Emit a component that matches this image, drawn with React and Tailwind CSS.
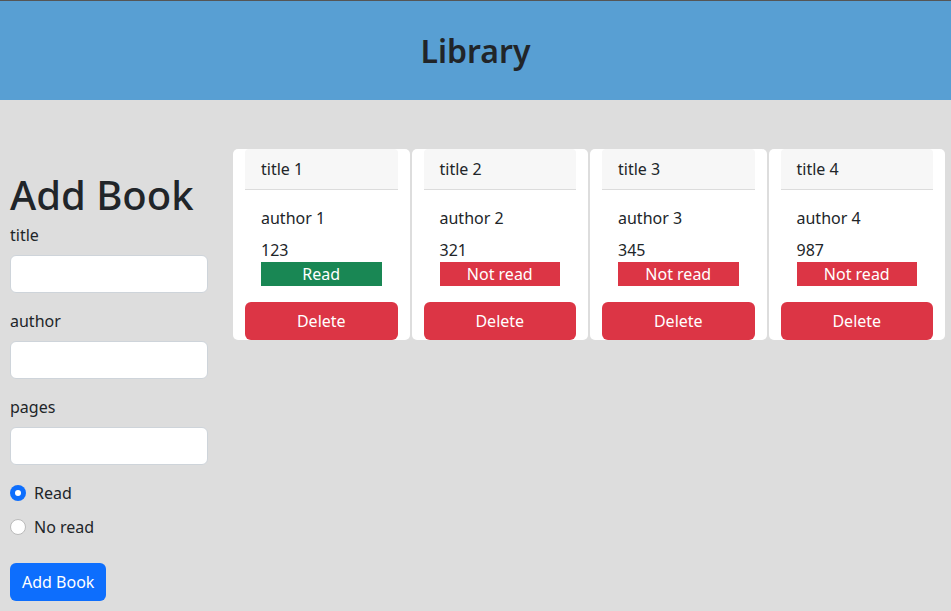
import { useState } from 'react';

const books = [
  { id: 1, title: 'title 1', author: 'author 1', pages: 123, read: true },
  { id: 2, title: 'title 2', author: 'author 2', pages: 321, read: false },
  { id: 3, title: 'title 3', author: 'author 3', pages: 345, read: false },
  { id: 4, title: 'title 4', author: 'author 4', pages: 987, read: false },
];

const BookCard = ({ book }) => (
  <div className="bg-white rounded-[5px] px-3 flex flex-col">
    <div className="bg-[#f7f7f7] border-b border-[#dcdcdc] h-[41px] px-4 flex items-center rounded-t-[4px]">
      {book.title}
    </div>
    <div className="px-4 pt-4">
      <div className="leading-6">{book.author}</div>
      <div className="leading-6 mt-2">{book.pages}</div>
      <div
        className={`h-6 leading-6 text-center text-white ${book.read ? 'bg-[#198754]' : 'bg-[#dc3545]'}`}
      >
        {book.read ? 'Read' : 'Not read'}
      </div>
    </div>
    <button className="mt-4 h-[38px] w-full rounded-[6px] bg-[#dc3545] text-white">
      Delete
    </button>
  </div>
);

const Field = ({ label, className }) => (
  <div className={className}>
    <label className="block leading-6">{label}</label>
    <input className="mt-2 block w-full h-[38px] bg-white border border-[#ced4da] rounded-[6px] px-3 outline-none" />
  </div>
);

export default function App() {
  const [read, setRead] = useState(true);

  return (
    <div className="min-h-[611px] bg-[#dddddd] text-[#212529] text-base font-['Noto_Sans','Open_Sans',sans-serif]">
      <header className="border-t border-[#555555] bg-[#589fd3] h-[100px] flex items-center justify-center">
        <h1 className="text-[32px] font-semibold leading-none">Library</h1>
      </header>

      <main className="flex pt-[49px]">
        <form className="w-[198px] ml-[10px] shrink-0" onSubmit={(e) => e.preventDefault()}>
          <h2 className="text-[40px] font-medium leading-[48px] mt-[22px] mb-[4px]">Add Book</h2>
          <Field label="title" />
          <Field label="author" className="mt-4" />
          <Field label="pages" className="mt-4" />

          <label className="mt-4 flex items-center gap-2 leading-6 cursor-pointer">
            <span
              onClick={() => setRead(true)}
              className={`w-4 h-4 rounded-full flex items-center justify-center ${read ? 'bg-[#0d6efd]' : 'bg-white border border-[#bbbbbb]'}`}
            >
              {read && <span className="w-1.5 h-1.5 rounded-full bg-white" />}
            </span>
            Read
          </label>
          <label className="mt-[10px] flex items-center gap-2 leading-6 cursor-pointer">
            <span
              onClick={() => setRead(false)}
              className={`w-4 h-4 rounded-full flex items-center justify-center ${!read ? 'bg-[#0d6efd]' : 'bg-white border border-[#bbbbbb]'}`}
            >
              {!read && <span className="w-1.5 h-1.5 rounded-full bg-white" />}
            </span>
            No read
          </label>

          <button className="mt-6 h-[38px] px-3 rounded-[6px] bg-[#0d6efd] text-white">
            Add Book
          </button>
        </form>

        <div className="ml-[25px] mr-[6px] flex-1 grid grid-cols-4 gap-[2px] items-start">
          {books.map((book) => (
            <BookCard key={book.id} book={book} />
          ))}
        </div>
      </main>
    </div>
  );
}
